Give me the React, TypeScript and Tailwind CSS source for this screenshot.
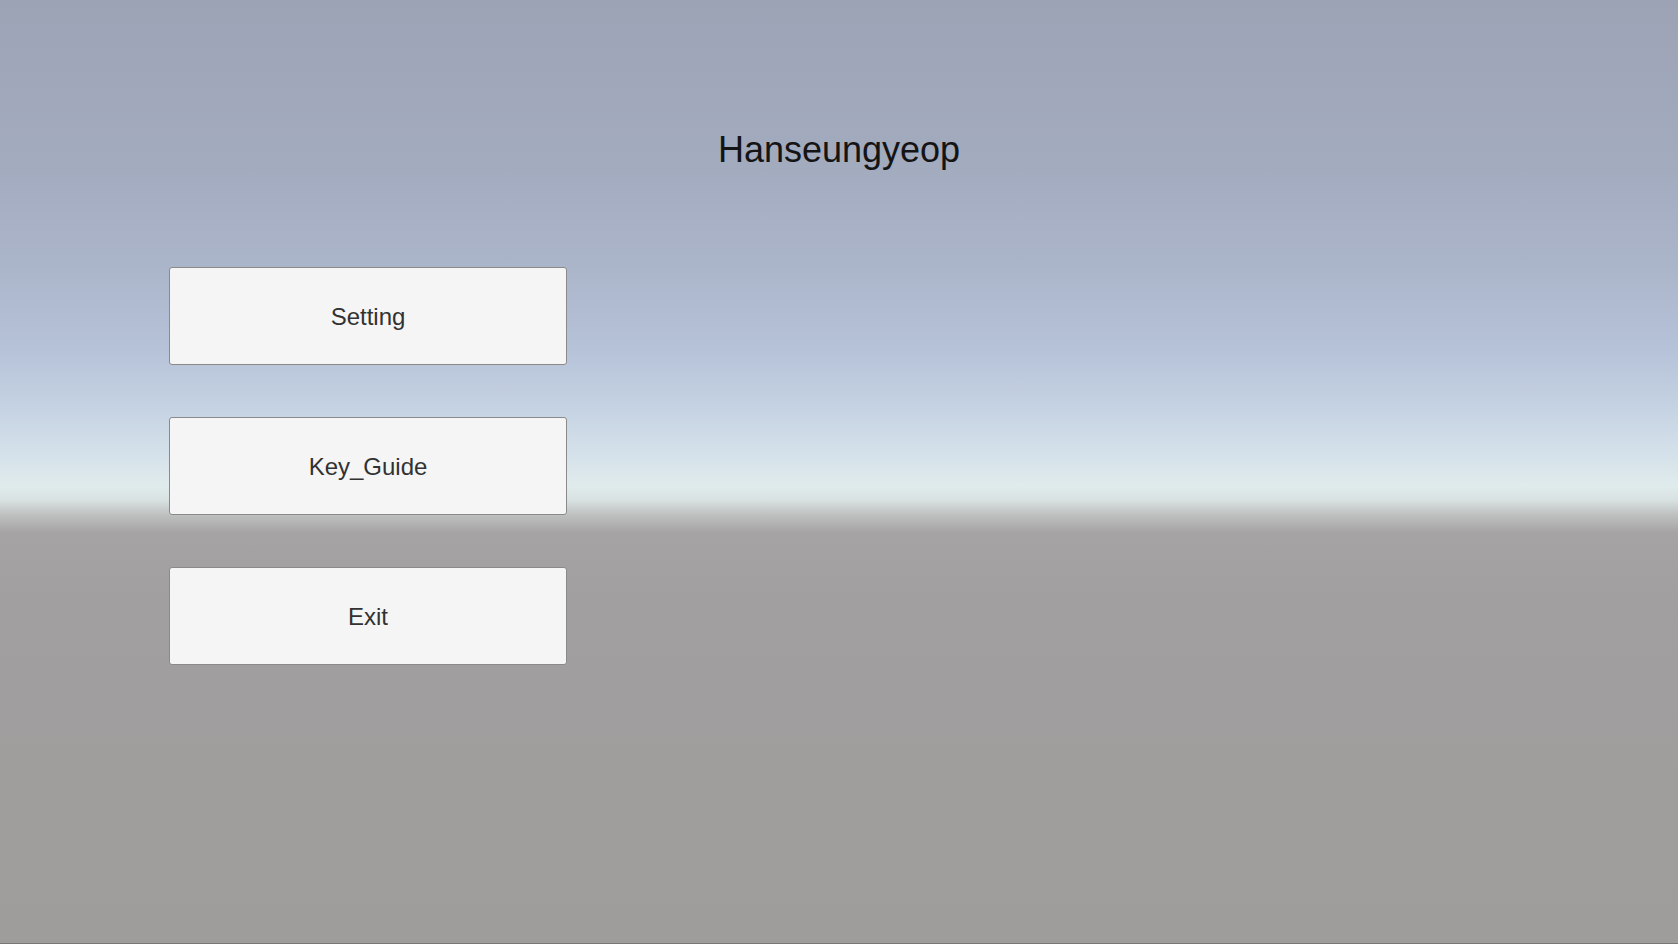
import React from 'react';

const menuItems = ['Setting', 'Key_Guide', 'Exit'];

const MenuButton: React.FC<{ label: string }> = ({ label }) => {
  return (
    <button className="w-[398px] h-[98px] bg-[#f5f5f5] border border-[#8a8a8a] rounded-[3px] flex items-center justify-center pt-[1px] text-[24px] text-[#323232] font-['Liberation_Sans',Arial,sans-serif]">
      {label}
    </button>
  );
};

export default function App() {
  return (
    <div className="relative w-full h-[944px] overflow-hidden font-['Liberation_Sans',Arial,sans-serif] bg-[linear-gradient(to_bottom,#9ca3b5_0%,#a3abbf_18%,#abb5ca_28%,#b6c2d8_37%,#c6d3e3_43.5%,#d6e2ea_48.5%,#e0ebec_51.5%,#d9e2e2_53%,#bfc2c1_54.5%,#a5a3a3_56.5%,#a19f9f_63%,#9e9d9b_100%)] border-b border-[#777]">
      <div className="pt-[132px] h-[166px] text-center text-[36px] leading-none text-[#141414]">
        Hanseungyeop
      </div>
      <div className="mt-[101px] ml-[169px] flex flex-col gap-[52px]">
        {menuItems.map((item) => (
          <MenuButton key={item} label={item} />
        ))}
      </div>
    </div>
  );
}
